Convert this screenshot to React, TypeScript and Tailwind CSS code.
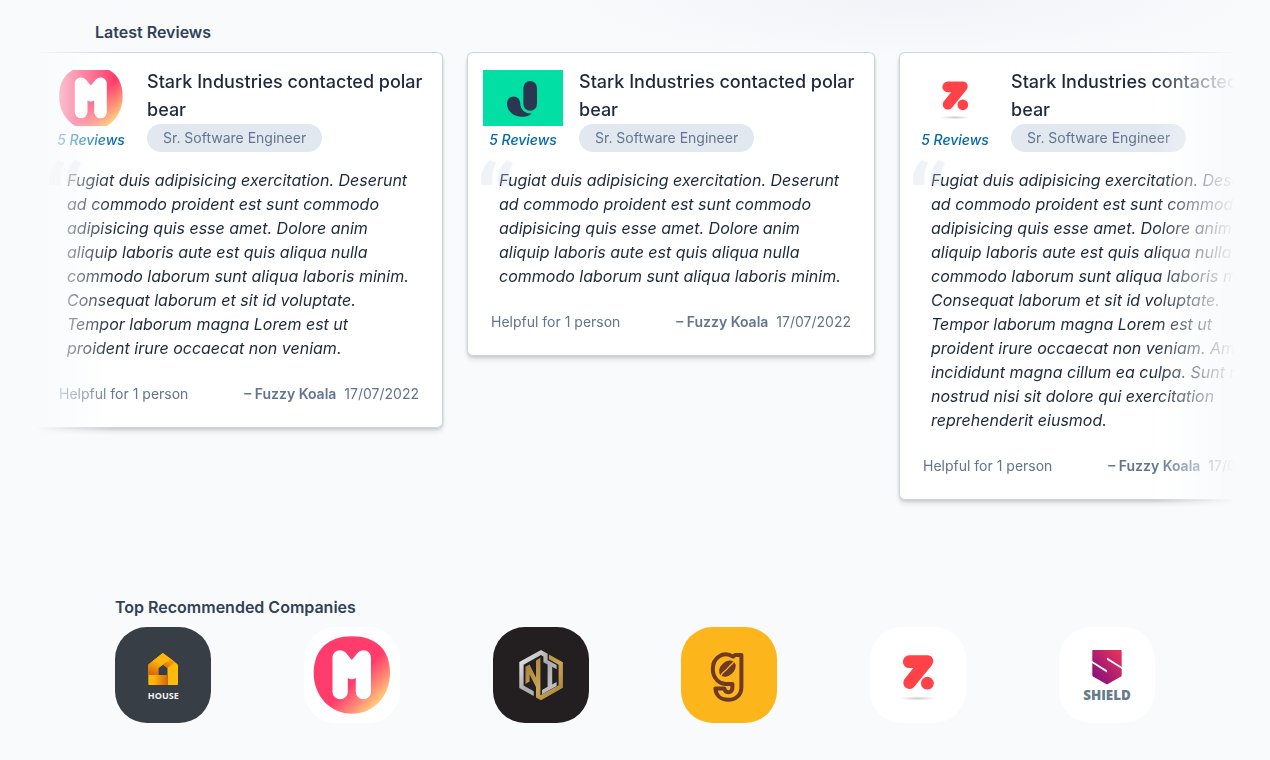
import type { ReactNode } from "react";

const TEXT_SHORT =
  "Fugiat duis adipisicing exercitation. Deserunt ad commodo proident est sunt commodo adipisicing quis esse amet. Dolore anim aliquip laboris aute est quis aliqua nulla commodo laborum sunt aliqua laboris minim.";
const TEXT_MEDIUM =
  TEXT_SHORT +
  " Consequat laborum et sit id voluptate. Tempor laborum magna Lorem est ut proident irure occaecat non veniam.";
const TEXT_LONG =
  TEXT_MEDIUM +
  " Amet incididunt magna cillum ea culpa. Sunt nisi nostrud nisi sit dolore qui exercitation reprehenderit eiusmod.";

type LogoProps = { className: string };

function LogoFrame({ className, label, children }: LogoProps & { label: string; children: ReactNode }) {
  return (
    <svg viewBox="0 0 96 96" preserveAspectRatio="xMidYMid slice" role="img" aria-label={label} className={className}>
      {children}
    </svg>
  );
}

function HouseLogo({ className }: LogoProps) {
  return (
    <LogoFrame className={className} label="House">
      <defs>
        <linearGradient id="house-roof" gradientUnits="userSpaceOnUse" x1="46" y1="32" x2="38" y2="48">
          <stop offset="0.2" stopColor="#fdb60a" />
          <stop offset="1" stopColor="#d9640a" />
        </linearGradient>
        <linearGradient id="house-base" x1="0" y1="0" x2="1" y2="0">
          <stop offset="0.3" stopColor="#fdb60a" />
          <stop offset="1" stopColor="#d9640a" />
        </linearGradient>
        <linearGradient id="house-fold" x1="0" y1="1" x2="1" y2="0">
          <stop offset="0" stopColor="#d9640a" />
          <stop offset="1" stopColor="#fdb60a" />
        </linearGradient>
      </defs>
      <rect width="96" height="96" fill="#373e45" />
      <path
        d="M47.8 26 L62.3 37 Q63 37.6 63 38.5 V57 Q63 58 62 58 H52.5 V41 L47.8 37.5 L43.3 41 V48 H33.3 V38.5 Q33.3 37.6 34 37 Z"
        fill="#ffbb0c"
      />
      <path d="M33.3 38.5 Q33.3 37.6 34 37 L47.8 26 L56 32 L43.3 41.3 V48 H33.3 Z" fill="url(#house-roof)" />
      <path d="M56 32 L60 35.2 L52.5 41 L47.8 37.6 Z" fill="url(#house-fold)" />
      <path d="M33.3 48 H52.5 V58 H34.3 Q33.3 58 33.3 57 Z" fill="url(#house-base)" />
      <text x="48.3" y="71.6" textAnchor="middle" fill="#f1f3f4" fontSize="9" fontWeight="700" fontFamily="'Open Sans', sans-serif">
        HOUSE
      </text>
    </LogoFrame>
  );
}

function MLogo({ className }: LogoProps) {
  return (
    <LogoFrame className={className} label="M">
      <defs>
        <linearGradient id="m-blob" gradientUnits="userSpaceOnUse" x1="52" y1="52" x2="76" y2="76">
          <stop offset="0" stopColor="#ff3c6c" />
          <stop offset="0.5" stopColor="#ff8474" />
          <stop offset="1" stopColor="#ffd47c" />
        </linearGradient>
      </defs>
      <rect width="96" height="96" fill="#ffffff" />
      <path
        d="M48 9.3 C71 9.3 86 22 86 46 C86 69.5 69.5 86.7 48 86.7 C26.5 86.7 9.7 69.5 9.7 46 C9.7 22 25 9.3 48 9.3 Z"
        fill="url(#m-blob)"
      />
      <path
        d="M28.5 31 C28.5 23.5 37 20.8 42 26 L47.8 33 L53.6 26 C58.6 20.8 67 23.5 67 31 V64.7 A7.6 7.6 0 0 1 51.8 64.7 V51 Q47.8 53.4 43.8 51 V64.7 A7.6 7.6 0 0 1 28.5 64.7 Z"
        fill="#ffffff"
      />
    </LogoFrame>
  );
}

function NiLogo({ className }: LogoProps) {
  return (
    <LogoFrame className={className} label="NI">
      <defs>
        <linearGradient id="ni-silver" x1="0" y1="0" x2="1" y2="1">
          <stop offset="0" stopColor="#f4f4f4" />
          <stop offset="0.5" stopColor="#a9aaac" />
          <stop offset="1" stopColor="#c9c9ca" />
        </linearGradient>
        <linearGradient id="ni-gold" x1="0" y1="0" x2="1" y2="1">
          <stop offset="0" stopColor="#a07a35" />
          <stop offset="0.55" stopColor="#c9a556" />
          <stop offset="1" stopColor="#a07a35" />
        </linearGradient>
      </defs>
      <rect width="96" height="96" fill="#231f20" />
      <path
        d="M40.7 69 L26.3 60.9 V35.1 L48 22.9 L54.6 26.8 V33 L63.6 38.1 V42.2 L59.2 39.8 V57.6 L63.6 55 V59.1 L49 67.2 V63 L54.6 59.8 V37.6 L50.4 35.2 V29.4 L48 28 L30.6 37.8 V58.4 L40.7 64.2 Z"
        fill="url(#ni-silver)"
      />
      <path
        d="M32.5 57 V39.8 L36.6 37.6 L43 50.4 V33.4 L47.4 30.8 V68.2 L65.6 58.2 V37.8 L55.9 32.3 V27.6 L69.9 35.2 V60.8 L48 73.3 L43 70.5 V60 L36.6 47.4 V54.6 Z"
        fill="url(#ni-gold)"
      />
    </LogoFrame>
  );
}

function CoffeeLogo({ className }: LogoProps) {
  return (
    <LogoFrame className={className} label="Coffee">
      <rect width="96" height="96" fill="#fdb51c" />
      <path
        d="M60.4 28 H54 L52 29.6 C42 23.6 31.8 31 31.8 41.8 C31.8 52.4 39.6 57.6 46 57 H51.4 V60.5 C51.4 66.4 44.4 66.6 43.4 61.6 H34.4 C35 68.6 40 72.8 47 72.8 C55 72.8 60.4 68 60.4 60 Z"
        fill="none"
        stroke="#6e3a27"
        strokeWidth="4"
        strokeLinejoin="round"
      />
      <g transform="rotate(-43 46.4 41.6)">
        <ellipse cx="46.4" cy="41.6" rx="9.4" ry="6.8" fill="#6e3a27" />
        <path d="M36.6 42.2 C40 41 43.5 42 46.4 41.6 S53 41.6 56.2 40.8" fill="none" stroke="#fdb51c" strokeWidth="1.3" />
      </g>
    </LogoFrame>
  );
}

function ZLogo({ className }: LogoProps) {
  return (
    <LogoFrame className={className} label="Z">
      <defs>
        <radialGradient id="z-shadow">
          <stop offset="0" stopColor="#cccccc" />
          <stop offset="1" stopColor="#ffffff" />
        </radialGradient>
      </defs>
      <rect width="96" height="96" fill="#ffffff" />
      <ellipse cx="47.8" cy="71.4" rx="18" ry="2.2" fill="url(#z-shadow)" />
      <path
        d="M39.2 28.3 H57.4 C62.8 28.3 65 34 61.8 38.2 L44 60 A6.2 6.2 0 0 1 34.4 52.2 L43.4 41 H39.2 A6.3 6.3 0 0 1 39.2 28.3 Z"
        fill="#ff4248"
      />
      <circle cx="57.4" cy="56.2" r="6.4" fill="#ff4248" />
    </LogoFrame>
  );
}

function ShieldLogo({ className }: LogoProps) {
  return (
    <LogoFrame className={className} label="Shield">
      <defs>
        <linearGradient id="shield-body" x1="1" y1="0" x2="0.1" y2="0.9">
          <stop offset="0" stopColor="#ef3458" />
          <stop offset="1" stopColor="#85107c" />
        </linearGradient>
      </defs>
      <rect width="96" height="96" fill="#ffffff" />
      <path
        d="M34 23 H62 Q62.7 23 62.7 23.8 V48 Q62.7 49 62 49.5 L48 57.5 L34 49.5 Q33.3 49 33.3 48 V23.8 Q33.3 23 34 23 Z"
        fill="url(#shield-body)"
      />
      <path d="M48 30.6 L63 40 V42 L48 32.8 Z M33 34 L48 43.2 V45.6 L33 36 Z" fill="#ffffff" />
      <text x="48" y="72.8" textAnchor="middle" fill="#667c8b" fontSize="13.4" fontWeight="800" fontFamily="'Open Sans', sans-serif">
        SHIELD
      </text>
    </LogoFrame>
  );
}

function JLogo({ className }: LogoProps) {
  return (
    <svg viewBox="0 0 80 80" preserveAspectRatio="xMidYMid slice" role="img" aria-label="J" className={className}>
      <rect width="80" height="80" fill="#02dfa5" />
      <rect x="40.4" y="23" width="13.6" height="29.7" rx="6.8" fill="#2b3750" />
      <path
        d="M24 45 A6.6 6.6 0 0 1 37.2 45 C37.2 51.6 42 56 48.9 55.4 C45.8 58 42 58.8 38.4 58.8 C30 58.8 24 53 24 45 Z"
        fill="#2b3750"
      />
    </svg>
  );
}

function QuoteMark({ className }: LogoProps) {
  return (
    <svg viewBox="0 0 32 25" aria-hidden="true" fill="currentColor" className={className}>
      <path d="M0 25 C-0.5 14 2.5 5 9.3 0 L15.2 3 C12 8 11.2 13 11.4 17 V25 Z" />
      <path d="M17 25 C16.5 14 19.5 5 26.3 0 L32 3 C29 8 28.2 13 28.4 17 V25 Z" />
    </svg>
  );
}

type Review = { id: number; Logo: (props: LogoProps) => ReactNode; text: string };

const reviews: Review[] = [
  { id: 1, Logo: MLogo, text: TEXT_MEDIUM },
  { id: 2, Logo: JLogo, text: TEXT_SHORT },
  { id: 3, Logo: ZLogo, text: TEXT_LONG },
];

const companies = [HouseLogo, MLogo, NiLogo, CoffeeLogo, ZLogo, ShieldLogo];

function ReviewCard({ Logo, text }: Review) {
  return (
    <article className="w-[408px] shrink-0 rounded-md bg-white pt-4 pb-6 shadow-[0_4px_4px_rgb(0_0_0/0.1),0_1px_3px_rgb(0_0_0/0.15)] ring-1 ring-slate-300 ring-inset">
      <header className="flex gap-4 px-4">
        <div className="flex w-20 shrink-0 flex-col items-center pt-0.5">
          <Logo className="h-14 w-20" />
          <a href="#reviews" className="mt-1 text-sm font-medium text-sky-700 italic">
            5 Reviews
          </a>
        </div>
        <div className="min-w-0">
          <h3 className="text-lg leading-7 font-medium text-slate-800">Stark Industries contacted polar bear</h3>
          <span className="inline-block rounded-full bg-slate-200 px-4 py-1 text-sm text-slate-500">
            Sr. Software Engineer
          </span>
        </div>
      </header>
      <blockquote className="relative mt-4 px-8 text-base text-slate-800 italic">
        {text}
        <QuoteMark className="pointer-events-none absolute -top-2 left-3.5 h-[25px] w-8 text-slate-300/30" />
      </blockquote>
      <footer className="mt-6 flex justify-between px-6 text-sm text-slate-500">
        <span>Helpful for 1 person</span>
        <span className="flex gap-2">
          <span className="font-semibold">– Fuzzy Koala</span>
          <time dateTime="2022-07-17">17/07/2022</time>
        </span>
      </footer>
    </article>
  );
}

export default function App() {
  return (
    <div className="min-h-screen bg-slate-50 bg-[radial-gradient(ellipse_340px_60px_at_72%_0px,#f2f3f8,#f8fafc)] bg-no-repeat font-['Inter',sans-serif]">
      <main className="mx-auto max-w-[1200px] pt-5 pb-9">
        <section id="reviews">
          <h2 className="px-[60px] text-base font-semibold text-slate-700">Latest Reviews</h2>
          <div className="mt-2 flex items-start gap-6 overflow-hidden pb-8 [mask-image:linear-gradient(to_right,transparent,black_80px,black_calc(100%-80px),transparent)]">
            {reviews.map((review) => (
              <ReviewCard key={review.id} {...review} />
            ))}
          </div>
        </section>
        <section className="mt-[63px] px-5 sm:px-20">
          <h2 className="text-base font-semibold text-slate-700">Top Recommended Companies</h2>
          <ul className="mt-2 flex flex-wrap justify-between gap-4">
            {companies.map((Logo, index) => (
              <li key={index}>
                <Logo className="size-24 rounded-[32px]" />
              </li>
            ))}
          </ul>
        </section>
      </main>
    </div>
  );
}
